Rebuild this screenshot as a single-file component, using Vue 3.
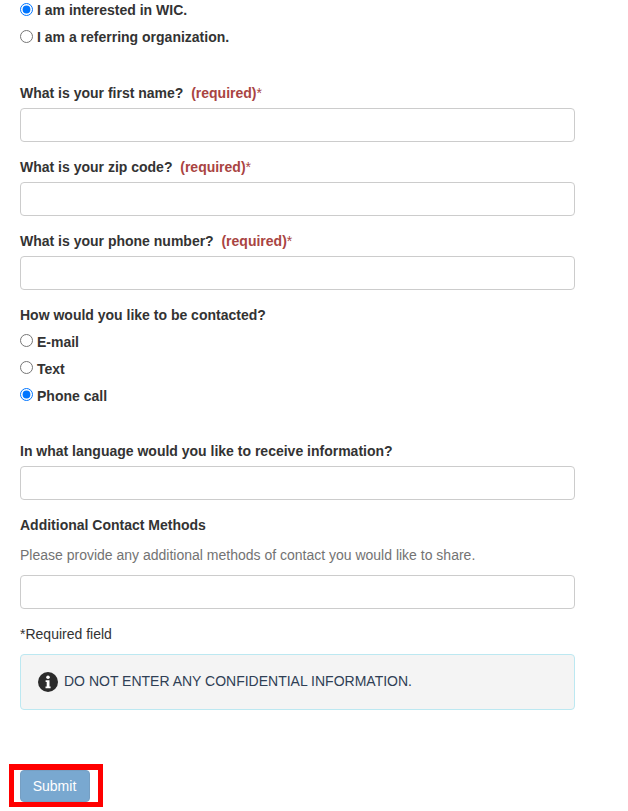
<template>
  <form class="page" @submit.prevent>
    <div class="radio-group first">
      <label v-for="opt in interestOptions" :key="opt" class="radio-row">
        <input type="radio" name="interest" :value="opt" v-model="interest" />
        <span>{{ opt }}</span>
      </label>
    </div>

    <div v-for="field in requiredFields" :key="field" class="form-group">
      <label class="field-label">{{ field }}&nbsp; <span class="required">(required)<span class="star">*</span></span></label>
      <input type="text" class="form-control" />
    </div>

    <div class="field-label contact-label">How would you like to be contacted?</div>
    <div class="radio-group contact">
      <label v-for="opt in contactOptions" :key="opt" class="radio-row">
        <input type="radio" name="contact" :value="opt" v-model="contact" />
        <span>{{ opt }}</span>
      </label>
    </div>

    <div class="form-group">
      <label class="field-label">In what language would you like to receive information?</label>
      <input type="text" class="form-control" />
    </div>

    <div class="field-label">Additional Contact Methods</div>
    <p class="help">Please provide any additional methods of contact you would like to share.</p>
    <input type="text" class="form-control" />

    <p class="required-note">*Required field</p>

    <div class="alert">
      <svg class="info-icon" viewBox="0 0 20 20" width="20" height="20">
        <circle cx="10" cy="10" r="10" fill="#2b2b2b" />
        <circle cx="10" cy="5.3" r="1.8" fill="#fff" />
        <path d="M7.6 8.2h3.9v6.3h1.1v1.7H7.5v-1.7h1.2V9.9H7.6z" fill="#fff" />
      </svg>
      <span class="alert-text">DO NOT ENTER ANY CONFIDENTIAL INFORMATION.</span>
    </div>

    <div class="submit-wrap">
      <button type="submit" class="submit-btn">Submit</button>
      <span class="highlight"></span>
    </div>
  </form>
</template>

<script setup>
import { ref } from "vue";

const interestOptions = ["I am interested in WIC.", "I am a referring organization."];
const contactOptions = ["E-mail", "Text", "Phone call"];
const requiredFields = [
  "What is your first name?",
  "What is your zip code?",
  "What is your phone number?",
];

const interest = ref("I am interested in WIC.");
const contact = ref("Phone call");
</script>

<style>
html,
body {
  background: #fff;
}
</style>

<style scoped>
.page {
  box-sizing: border-box;
  width: 595px;
  height: 811px;
  padding: 0 20px;
  overflow: hidden;
  font-family: "Liberation Sans", Arial, sans-serif;
  font-size: 14px;
  line-height: 20px;
  color: #333;
}

.radio-group {
  display: flex;
  flex-direction: column;
  gap: 7px;
}

.radio-group.first {
  margin-bottom: 36px;
}

.radio-group.contact {
  margin: 7px 0 35px;
}

.radio-row {
  display: flex;
  align-items: center;
  height: 20px;
  font-weight: 700;
}

.radio-row input {
  width: 13px;
  height: 13px;
  margin: 0 4px 1px 0;
}

.contact .radio-row input {
  margin-bottom: 3px;
}

.form-group {
  margin-bottom: 15px;
}

.field-label {
  display: block;
  margin-bottom: 5px;
  font-weight: 700;
}

.contact-label {
  margin-bottom: 0;
}

.required {
  color: #a94442;
}

.star {
  font-weight: 400;
}

.form-control {
  display: block;
  box-sizing: border-box;
  width: 100%;
  height: 34px;
  border: 1px solid #ccc;
  border-radius: 4px;
  background: #fff;
}

.help {
  margin: 10px 0;
  color: #737373;
}

.required-note {
  margin: 15px 0 10px;
}

.alert {
  display: flex;
  align-items: center;
  gap: 6px;
  box-sizing: border-box;
  height: 56px;
  padding: 0 17px;
  border: 1px solid #bce8f1;
  border-radius: 4px;
  background: #f4f4f4;
  color: #2f3f55;
}

.alert-text {
  margin-bottom: 2px;
}

.submit-wrap {
  position: relative;
  width: 70px;
  margin-top: 60px;
}

.submit-btn {
  display: block;
  width: 70px;
  height: 32px;
  padding: 0 1px 0 0;
  border: 1px solid #2e6da4;
  border-radius: 4px;
  background: #337ab7;
  opacity: 0.65;
  color: #fff;
  font: inherit;
}

.highlight {
  position: absolute;
  top: -6px;
  left: -11px;
  width: 94px;
  height: 43px;
  box-sizing: border-box;
  border: 5px solid #f00;
  border-top-width: 6px;
  pointer-events: none;
}
</style>
